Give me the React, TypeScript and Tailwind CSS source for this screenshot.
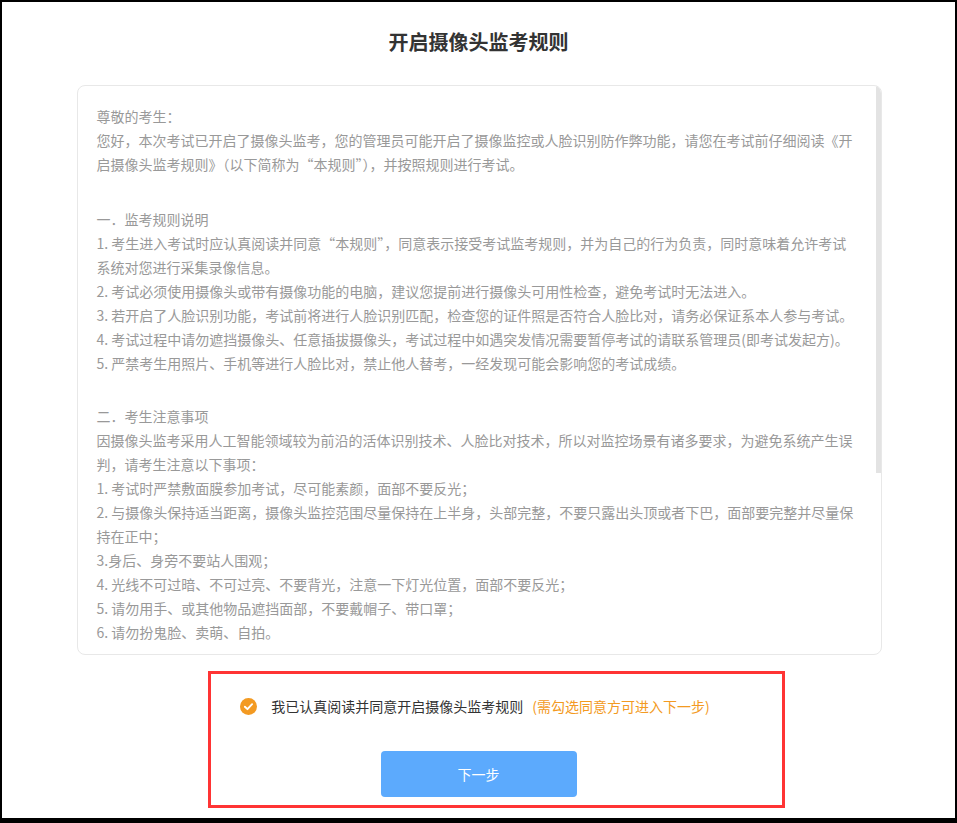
import React from 'react'

const intro = [
  '尊敬的考生：',
  '您好，本次考试已开启了摄像头监考，您的管理员可能开启了摄像监控或人脸识别防作弊功能，请您在考试前仔细阅读《开',
  '启摄像头监考规则》（以下简称为“本规则”），并按照规则进行考试。',
]

const rules = [
  '一．监考规则说明',
  '1. 考生进入考试时应认真阅读并同意“本规则”，同意表示接受考试监考规则，并为自己的行为负责，同时意味着允许考试',
  '系统对您进行采集录像信息。',
  '2. 考试必须使用摄像头或带有摄像功能的电脑，建议您提前进行摄像头可用性检查，避免考试时无法进入。',
  '3. 若开启了人脸识别功能，考试前将进行人脸识别匹配，检查您的证件照是否符合人脸比对，请务必保证系本人参与考试。',
  '4. 考试过程中请勿遮挡摄像头、任意插拔摄像头，考试过程中如遇突发情况需要暂停考试的请联系管理员(即考试发起方)。',
  '5. 严禁考生用照片、手机等进行人脸比对，禁止他人替考，一经发现可能会影响您的考试成绩。',
]

const notes = [
  '二．考生注意事项',
  '因摄像头监考采用人工智能领域较为前沿的活体识别技术、人脸比对技术，所以对监控场景有诸多要求，为避免系统产生误',
  '判，请考生注意以下事项：',
  '1. 考试时严禁敷面膜参加考试，尽可能素颜，面部不要反光；',
  '2. 与摄像头保持适当距离，摄像头监控范围尽量保持在上半身，头部完整，不要只露出头顶或者下巴，面部要完整并尽量保',
  '持在正中；',
  '3.身后、身旁不要站人围观；',
  '4. 光线不可过暗、不可过亮、不要背光，注意一下灯光位置，面部不要反光；',
  '5. 请勿用手、或其他物品遮挡面部，不要戴帽子、带口罩；',
  '6. 请勿扮鬼脸、卖萌、自拍。',
]

function Lines({ lines, className = '' }: { lines: string[]; className?: string }) {
  return (
    <div className={className}>
      {lines.map((l, i) => (
        <div key={i} className="h-6 leading-6 whitespace-nowrap">
          {l}
        </div>
      ))}
    </div>
  )
}

function CheckIcon() {
  return (
    <svg width="17" height="17" viewBox="0 0 16 16">
      <circle cx="8" cy="8" r="8" fill="#f39a22" />
      <path d="M4.6 8.2 L7 10.5 L11.4 5.8" fill="none" stroke="#fff" strokeWidth="1.8" strokeLinecap="round" strokeLinejoin="round" />
    </svg>
  )
}

export default function App() {
  return (
    <div
      className="w-[957px] h-[823px] bg-white border-2 border-b-[5px] border-black flex flex-col items-center relative"
      style={{ fontFamily: '"Microsoft YaHei", "Noto Sans CJK SC", "Noto Sans", sans-serif' }}
    >
      {/* Title */}
      <h1 className="pt-[26px] text-[20px] leading-7 font-bold text-[#333]">开启摄像头监考规则</h1>

      {/* Rules card */}
      <div className="mt-[29px] ml-[1px] w-[805px] h-[570px] border border-[#e8e8e8] rounded-lg overflow-hidden flex">
        <div className="flex-1 pt-[18px] pl-[19px] text-[14px] text-[#999]">
          <Lines lines={intro} />
          <Lines lines={rules} className="mt-[31px]" />
          <Lines lines={notes} className="mt-[29px]" />
        </div>
        {/* scrollbar */}
        <div className="w-[5px] shrink-0">
          <div className="h-[387px] bg-[#e3e3e3]" />
        </div>
      </div>

      {/* Agreement */}
      <div className="mt-[39px] flex items-center justify-center h-6 ml-[-7px]">
        <CheckIcon />
        <span className="ml-[14px] text-[14px] text-[#333]">我已认真阅读并同意开启摄像头监考规则</span>
        <span className="ml-[9px] text-[14px] text-[#f39a22]">(需勾选同意方可进入下一步)</span>
      </div>

      <button className="mt-[33px] w-[196px] h-[46px] rounded-[4px] bg-[#5caafd] text-white text-[14px]">下一步</button>

      {/* Highlight annotation */}
      <div className="absolute left-[206px] top-[669px] w-[577px] h-[137px] border-[3px] border-[#ff3434] pointer-events-none" />
    </div>
  )
}
